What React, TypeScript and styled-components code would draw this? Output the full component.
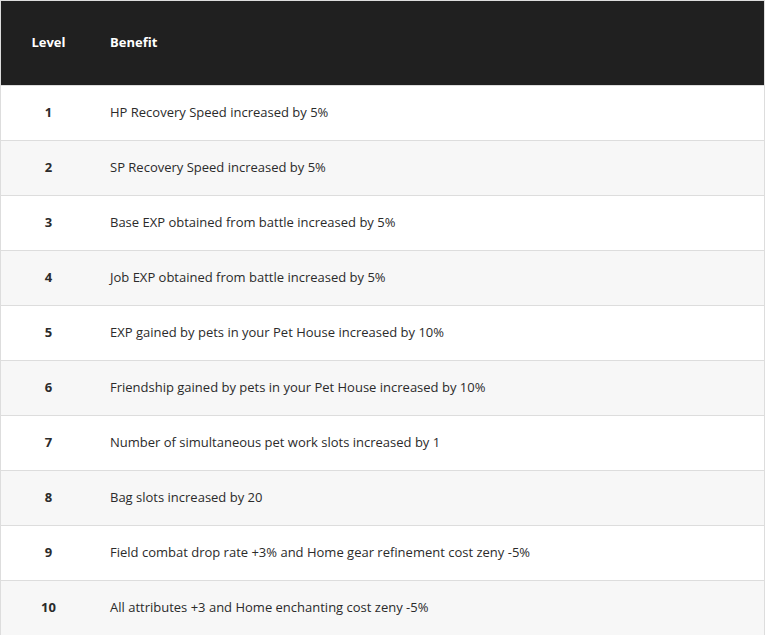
import React from "react";
import styled, { createGlobalStyle } from "styled-components";

const GlobalStyle = createGlobalStyle`
    body {
        margin: 0;
        background: #ffffff;
        font-family: "Open Sans", "Liberation Sans", sans-serif;
    }
`;

const Table = styled.table`
    width: 765px;
    border-collapse: collapse;
    border: 1px solid #dddddd;
    color: #2b2b2b;
    font-size: 13px;
`;

const HeadRow = styled.tr`
    background: #202020;
    height: 85px;
    border-bottom: 1px solid #dddddd;
`;

const HeadCell = styled.th<{ $level?: boolean }>`
    color: #ffffff;
    font-weight: 700;
    font-size: 13px;
    padding: 0 0 3px ${(p) => (p.$level ? "0" : "14px")};
    text-align: ${(p) => (p.$level ? "center" : "left")};
    width: ${(p) => (p.$level ? "95px" : "auto")};
`;

const Row = styled.tr<{ $even?: boolean }>`
    height: 55px;
    background: ${(p) => (p.$even ? "#f7f7f7" : "#ffffff")};
    border-bottom: 1px solid #dddddd;
`;

const LevelCell = styled.td`
    text-align: center;
    font-weight: 700;
    padding: 0 0 2px;
`;

const BenefitCell = styled.td`
    padding: 0 0 2px 14px;
`;

const benefits = [
    "HP Recovery Speed increased by 5%",
    "SP Recovery Speed increased by 5%",
    "Base EXP obtained from battle increased by 5%",
    "Job EXP obtained from battle increased by 5%",
    "EXP gained by pets in your Pet House increased by 10%",
    "Friendship gained by pets in your Pet House increased by 10%",
    "Number of simultaneous pet work slots increased by 1",
    "Bag slots increased by 20",
    "Field combat drop rate +3% and Home gear refinement cost zeny -5%",
    "All attributes +3 and Home enchanting cost zeny -5%",
];

const App = function () {
    return (
        <>
            <GlobalStyle />
            <Table>
                <thead>
                    <HeadRow>
                        <HeadCell $level>Level</HeadCell>
                        <HeadCell>Benefit</HeadCell>
                    </HeadRow>
                </thead>
                <tbody>
                    {benefits.map((b, i) => (
                        <Row key={i} $even={i % 2 === 1}>
                            <LevelCell>{i + 1}</LevelCell>
                            <BenefitCell>{b}</BenefitCell>
                        </Row>
                    ))}
                </tbody>
            </Table>
        </>
    );
};

export default App;
